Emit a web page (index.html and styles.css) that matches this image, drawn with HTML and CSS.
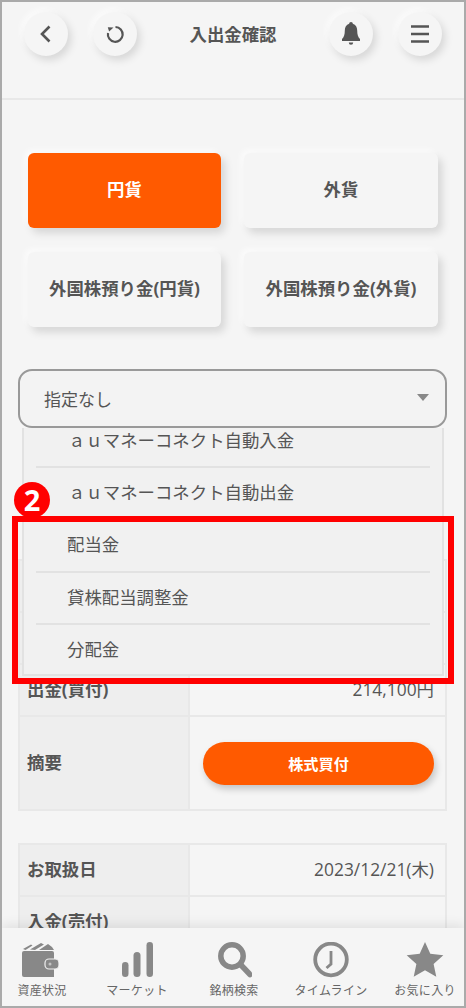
FILE: index.html
```html
<!DOCTYPE html>
<html lang="ja">
<head>
<meta charset="utf-8">
<title>入出金確認</title>
<link rel="stylesheet" href="styles.css">
</head>
<body>
<div class="frame">
  <main class="main">
    <header class="header">
      <div class="header-group">
        <button class="round"><svg width="24" height="24" viewBox="0 0 24 24"><path d="M15.500 4.500 8 12l7.500 7.500" class="stroke"/></svg></button>
        <button class="round"><svg width="24" height="24" viewBox="0 0 24 24"><path d="M12.500 5A7.400 7.400 0 1 1 5 11" class="stroke thin"/><path d="M4.800 5.200l5.700.3-4.400 4z" class="fill"/></svg></button>
      </div>
      <h1 class="title">入出金確認</h1>
      <div class="header-group right">
        <button class="round"><svg width="24" height="26" viewBox="0 0 24 26"><path d="M12 1c1.100 0 1.800.8 1.800 1.800 3 .9 4.400 3.400 4.400 6.700 0 4.200.8 6.600 2.800 8.500v2H3v-2c2-1.900 2.800-4.300 2.800-8.500 0-3.300 1.400-5.800 4.400-6.700C10.200 1.800 10.900 1 12 1zM9.800 21.500h4.400a2.200 2.200 0 0 1-4.400 0z" class="fill"/></svg></button>
        <button class="round"><svg width="24" height="24" viewBox="0 0 24 24"><path d="M3 4.500h18M3 12h18M3 19.500h18" class="stroke bars"/></svg></button>
      </div>
    </header>

    <section class="tabs">
      <button class="tab active">円貨</button>
      <button class="tab">外貨</button>
      <button class="tab">外国株預り金(円貨)</button>
      <button class="tab">外国株預り金(外貨)</button>
    </section>

    <section class="filter">
      <div class="select"><span>指定なし</span><i class="caret"></i></div>
      <ul class="menu">
        <li class="wide">ａｕマネーコネクト自動入金</li>
        <li class="wide">ａｕマネーコネクト自動出金</li>
        <li>配当金</li>
        <li>貸株配当調整金</li>
        <li>分配金</li>
      </ul>
    </section>

    <table class="record">
      <tr><th>お取扱日</th><td></td></tr>
      <tr><th>入金(売付)</th><td></td></tr>
      <tr><th>出金(買付)</th><td>214,100円</td></tr>
      <tr class="tall"><th>摘要</th><td><button class="pill">株式買付</button></td></tr>
    </table>

    <table class="record second">
      <tr><th>お取扱日</th><td>2023/12/21(木)</td></tr>
      <tr><th>入金(売付)</th><td></td></tr>
    </table>

    <div class="callout"></div>
    <div class="badge">2</div>
  </main>

  <nav class="nav">
    <a class="nav-item"><svg class="wallet" width="37" height="36" viewBox="0 0 37 36"><path d="M1 7l8-4.500 1.500 1L3.500 8zM8 7.500 19 1l3 1.500L13 8zM17 8l9-6 4 3 2 3z" class="nav-fill"/><path d="M0 11a2 2 0 0 1 2-2h28a2 2 0 0 1 2 2v24H2a2 2 0 0 1-2-2z" class="nav-fill"/><rect x="23" y="17" width="14" height="10" rx="4" class="clasp"/><circle cx="28" cy="22" r="1.500" fill="#c4c4c4"/></svg><span>資産状況</span></a>
    <a class="nav-item"><svg width="34" height="36" viewBox="0 0 34 36"><rect x="2" y="20" width="6.500" height="15" rx="3.250" class="nav-fill"/><rect x="13.500" y="10" width="7" height="25" rx="3.500" class="nav-fill"/><rect x="26.500" y="0" width="6.500" height="35" rx="3.250" class="nav-fill"/></svg><span>マーケット</span></a>
    <a class="nav-item"><svg width="36" height="36" viewBox="0 0 36 36"><circle cx="16" cy="14" r="11.200" class="nav-stroke"/><path d="M25 23l9 9.500" class="nav-stroke round-cap"/></svg><span>銘柄検索</span></a>
    <a class="nav-item"><svg width="36" height="36" viewBox="0 0 36 36"><circle cx="18" cy="17.500" r="15.800" class="nav-stroke thinner"/><path d="M18 9v13l-4.500 4" class="nav-stroke thinnest"/></svg><span>タイムライン</span></a>
    <a class="nav-item"><svg width="38" height="36" viewBox="0 0 38 36"><path d="M19 0l5.300 11.800 13 1.400-9.700 8.700 2.700 12.800L19 28.200 7.700 34.700l2.700-12.800L.700 13.200l13-1.400z" class="nav-fill star"/></svg><span>お気に入り</span></a>
  </nav>
</div>
</body>
</html>
```
FILE: styles.css
```css
* { box-sizing: border-box; }
html, body { margin: 0; height: 100%; }
body {
  font-family: "Open Sans", "Noto Sans CJK JP", sans-serif;
  color: #555;
  background: #f5f5f5;
}
.frame {
  width: 466px;
  height: 1008px;
  border: 2px solid #aaa;
  background: #f5f5f5;
  display: flex;
  flex-direction: column;
  overflow: hidden;
  position: relative;
}
.main { flex: 1; min-height: 0; overflow: hidden; position: relative; padding: 0 16px; }
.header {
  height: 98px;
  margin: 0 -16px;
  padding: 10px 22px 0 22px;
  border-bottom: 2px solid #e8e8e8;
  display: flex;
  justify-content: space-between;
  align-items: flex-start;
}
.header-group { display: flex; gap: 25px; width: 113px; }
.round {
  width: 44px;
  height: 44px;
  padding: 0;
  border: 0;
  border-radius: 50%;
  background: #f5f5f5;
  box-shadow: 3px 4px 8px rgba(0,0,0,.13), -3px -3px 6px rgba(255,255,255,.7);
  display: flex;
  align-items: center;
  justify-content: center;
}
.stroke { fill: none; stroke: #555; stroke-width: 2.600; }
.stroke.thin { stroke-width: 2.200; }
.stroke.bars { stroke-width: 2.400; }
.fill { fill: #555; }
.title { margin: 0; font-size: 17.400px; line-height: 44px; font-weight: 700; color: #555; }
.tabs {
  margin: 53px 8px 0 10px;
  display: grid;
  grid-template-columns: 193px 194px;
  grid-auto-rows: 75px;
  column-gap: 23px;
  row-gap: 24px;
}
.tab {
  border: 0;
  border-radius: 6px;
  background: #f5f5f5;
  font: 700 17.400px "Open Sans", "Noto Sans CJK JP", sans-serif;
  color: #555;
  padding: 0 0 4px;
  box-shadow: 4px 5px 9px rgba(0,0,0,.13), -3px -3px 6px rgba(255,255,255,.7);
}
.tab.active { background: #ff5a00; color: #fff; }
.filter { margin-top: 42px; position: relative; z-index: 2; }
.select {
  height: 59px;
  width: 429px;
  border: 2px solid #999;
  border-radius: 14px;
  padding: 0 16px 0 24px;
  display: flex;
  align-items: center;
  justify-content: space-between;
  font-size: 17px;
  background: #f3f3f3;
  position: relative;
  z-index: 1;
}
.caret {
  width: 0;
  height: 0;
  border-left: 6px solid transparent;
  border-right: 6px solid transparent;
  border-top: 7px solid #888;
  margin-top: -3px;
}
.menu {
  position: absolute;
  top: 59px;
  left: 4px;
  width: 422px;
  height: 248px;
  margin: 0;
  padding: 0 12px;
  list-style: none;
  background: #f1f1f1;
  border: 2px solid #e2e2e2;
  border-top: 0;
}
.menu li {
  height: 52.300px;
  border-bottom: 2px solid #e2e2e2;
  padding: 0 0 2px 31px;
  font-size: 17.400px;
  line-height: 24px;
  display: flex;
  align-items: center;
}
.menu li:first-child { height: 40px; align-items: flex-start; padding-top: 0; }
.menu li:last-child { border-bottom: 0; padding-bottom: 5px; }
.menu li.wide { padding-left: 32px; }
.record {
  width: 429px;
  border-collapse: collapse;
  table-layout: fixed;
  margin-top: 131px;
  font-size: 17.400px;
}
.record.second { margin-top: 32px; }
.record th, .record td { border: 2px solid #e8e8e8; height: 52px; padding: 0 11px 4px 7px; }
.record th { width: 170px; background: #eee; text-align: left; font-weight: 700; }
.record td { text-align: right; }
.record .tall th, .record .tall td { height: 94px; }
.pill {
  display: block;
  width: 231px;
  height: 43px;
  margin: 4px 0 0 auto;
  border: 0;
  border-radius: 22px;
  background: #ff5a00;
  color: #fff;
  font: 700 15.200px "Open Sans", "Noto Sans CJK JP", sans-serif;
  box-shadow: 2px 4px 7px rgba(0,0,0,.2);
}
.callout {
  position: absolute;
  left: 10px;
  top: 514px;
  width: 442px;
  height: 168px;
  border: 6px solid #f00;
  z-index: 3;
}
.badge {
  position: absolute;
  left: 12px;
  top: 480px;
  width: 36px;
  height: 36px;
  border-radius: 50%;
  background: #f00;
  color: #fff;
  font: 700 29px/36px "Open Sans", sans-serif;
  text-align: center;
  z-index: 3;
}
.nav {
  height: 78px;
  flex: none;
  display: grid;
  grid-template-columns: 80px 110px 84px 110px 78px;
  background: #f5f5f5;
  box-shadow: 0 -4px 10px rgba(0,0,0,.08);
  position: relative;
  z-index: 4;
  padding-top: 14px;
}
.nav-item {
  display: flex;
  flex-direction: column;
  align-items: center;
  gap: 5px;
  color: #666;
  font-size: 12px;
  line-height: 16px;
  letter-spacing: .3px;
  white-space: nowrap;
}
.nav-item svg { display: block; flex: none; }
.wallet { margin-right: 4px; }
.nav-fill { fill: #888; }
.clasp { fill: #888; stroke: #f0f0f0; stroke-width: 1.200; }
.nav-stroke { fill: none; stroke: #888; stroke-width: 5.500; }
.round-cap { stroke-linecap: round; stroke-width: 5.500; }
.nav-stroke.thinner { stroke-width: 3.800; }
.nav-stroke.thinnest { stroke-width: 2.800; }
```
